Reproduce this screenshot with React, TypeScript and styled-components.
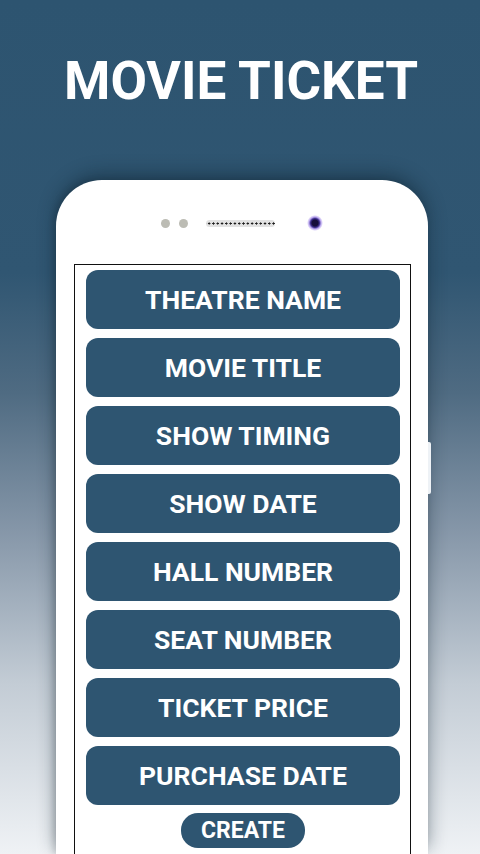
import React from "react";
import styled, { createGlobalStyle } from "styled-components";

const fields = [
  "THEATRE NAME",
  "MOVIE TITLE",
  "SHOW TIMING",
  "SHOW DATE",
  "HALL NUMBER",
  "SEAT NUMBER",
  "TICKET PRICE",
  "PURCHASE DATE",
];

const GlobalStyle = createGlobalStyle`
  html, body {
    margin: 0;
    padding: 0;
  }
  body {
    font-family: Roboto, "Liberation Sans", Arial, sans-serif;
  }
`;

const App: React.FC = () => {
  return (
    <>
      <GlobalStyle />
      <Page>
        <Header>
          <Title>MOVIE TICKET</Title>
        </Header>
        <Phone>
          <SideKey />
          <SensorBar>
            <Dot />
            <Dot />
            <Speaker />
            <Camera />
          </SensorBar>
          <Screen>
            {fields.map((label) => (
              <FieldButton key={label}>{label}</FieldButton>
            ))}
            <CreateButton>CREATE</CreateButton>
          </Screen>
        </Phone>
      </Page>
    </>
  );
};

export default App;

const Page = styled.div`
  width: 480px;
  height: 854px;
  overflow: hidden;
  background: linear-gradient(
    to bottom,
    #2d5470 0%,
    #305672 32%,
    #4f6b82 46%,
    #8596a8 62%,
    #c3ccd5 80%,
    #eff2f5 100%
  );
  display: flex;
  flex-direction: column;
`;

const Header = styled.header`
  height: 180px;
  padding-top: 55px;
  box-sizing: border-box;
  display: flex;
  justify-content: center;
`;

const Title = styled.h1`
  margin: 0 0 0 2px;
  font-family: Roboto, "Liberation Sans", Arial, sans-serif;
  font-weight: 700;
  font-size: 53px;
  line-height: 1;
  color: #ffffff;
`;

const Phone = styled.div`
  position: relative;
  width: 372px;
  margin-left: 56px;
  flex: 1;
  background: #ffffff;
  border-radius: 46px 46px 0 0;
  box-shadow: 0 -6px 18px rgba(10, 30, 45, 0.45), -3px 0 6px rgba(0, 0, 0, 0.12);
  display: flex;
  flex-direction: column;
`;

const SideKey = styled.div`
  position: absolute;
  right: -3px;
  top: 262px;
  width: 3px;
  height: 52px;
  background: #eef2f6;
  border-radius: 0 2px 2px 0;
`;

const SensorBar = styled.div`
  height: 84px;
  display: flex;
  align-items: center;
  padding-left: 105px;
  padding-top: 2px;
  box-sizing: border-box;
`;

const Dot = styled.span`
  width: 9px;
  height: 9px;
  border-radius: 50%;
  background: #bcbcb4;
  margin-right: 9px;
`;

const Speaker = styled.span`
  width: 69px;
  height: 7px;
  margin-left: 9px;
  border-radius: 4px;
  background-color: #e2e2e2;
  background-image: radial-gradient(circle, #1c1c1c 0.9px, transparent 1.3px);
  background-size: 4.3px 7px;
  background-position: 1px 0;
`;

const Camera = styled.span`
  width: 16px;
  height: 16px;
  margin-left: 32px;
  margin-top: -1px;
  border-radius: 50%;
  background: radial-gradient(
    circle,
    #140c3a 0 3px,
    #3e2f8f 4.5px,
    rgba(150, 120, 230, 0.65) 6px,
    rgba(255, 255, 255, 0) 8px
  );
`;

const Screen = styled.div`
  margin: 0 17px 0 18px;
  flex: 1;
  border: 1.5px solid #111111;
  border-bottom: none;
  padding: 5px 10px 0 11px;
  display: flex;
  flex-direction: column;
  align-items: stretch;
  gap: 9px;
  box-sizing: border-box;
`;

const FieldButton = styled.div`
  height: 59px;
  border-radius: 12px;
  background: #2e5571;
  color: #ffffff;
  font-family: Roboto, "Liberation Sans", Arial, sans-serif;
  font-weight: 700;
  font-size: 26.5px;
  display: flex;
  align-items: center;
  justify-content: center;
`;

const CreateButton = styled.div`
  align-self: center;
  margin-top: -1px;
  width: 124px;
  height: 35px;
  border-radius: 17px;
  background: #2e5571;
  color: #ffffff;
  font-family: Roboto, "Liberation Sans", Arial, sans-serif;
  font-weight: 700;
  font-size: 23px;
  display: flex;
  align-items: center;
  justify-content: center;
`;
